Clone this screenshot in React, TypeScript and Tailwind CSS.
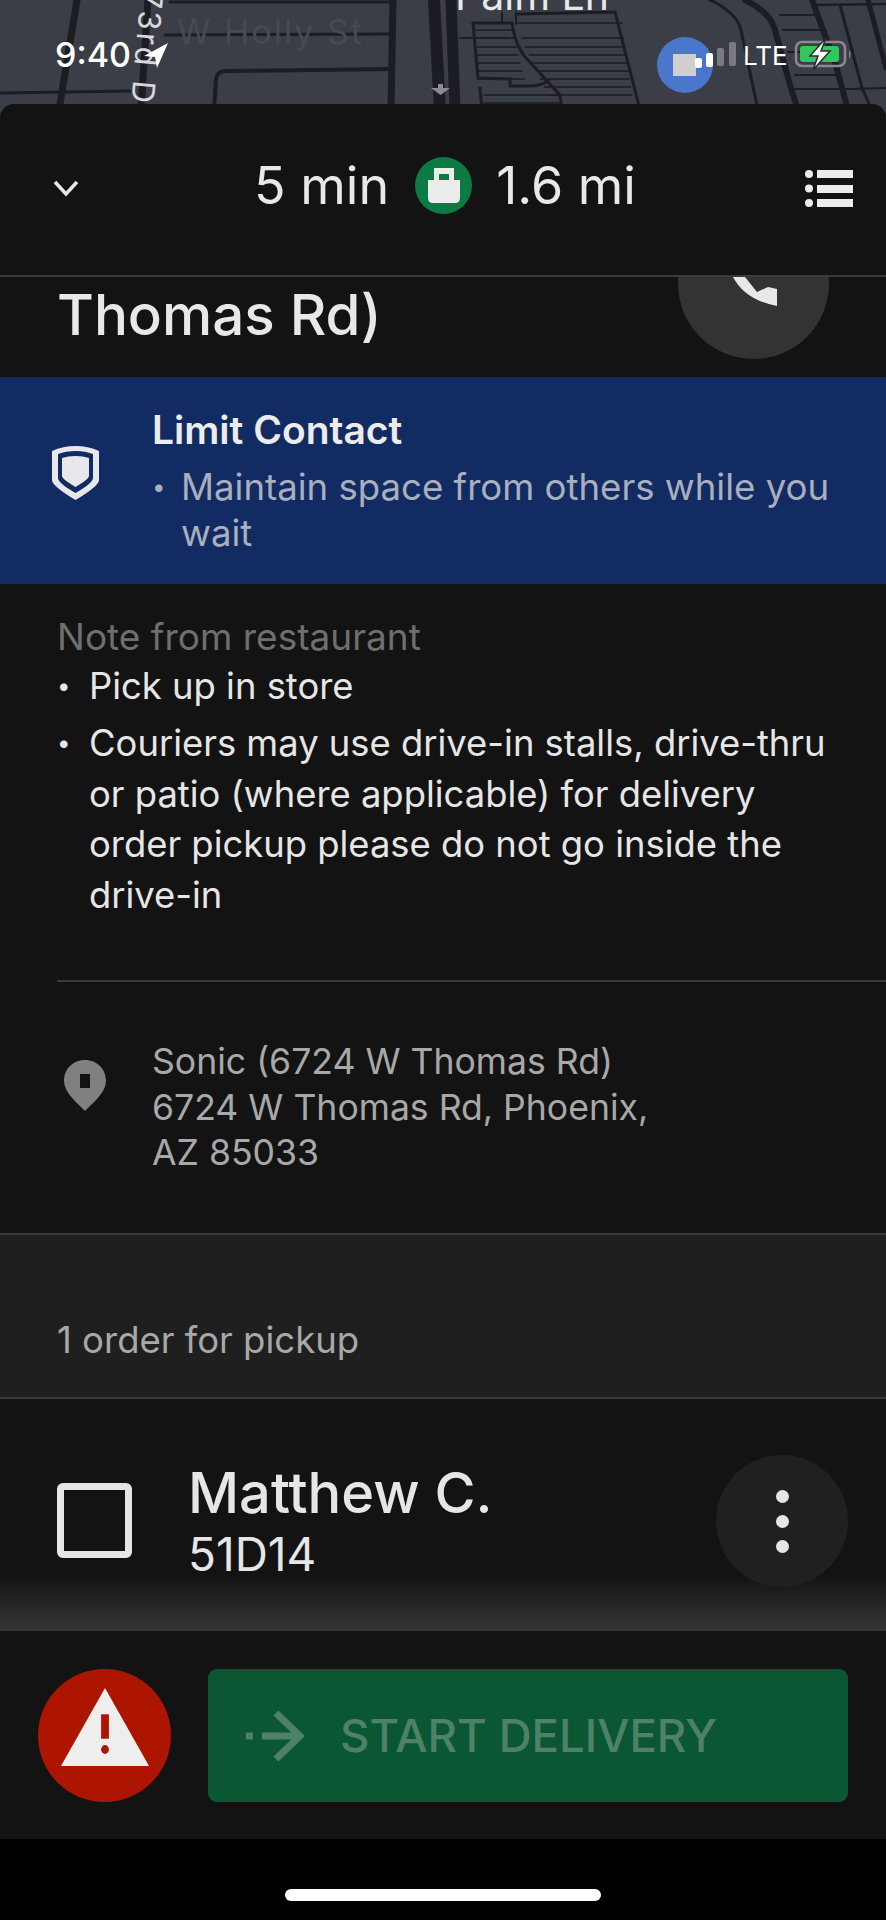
const FONT = "font-['Inter','Liberation_Sans',sans-serif]";

function MapBackdrop() {
  const left = [30, 38, 47, 55, 63, 71, 79];
  const right = [23, 38, 47, 55, 63, 71, 79, 87, 95];
  return (
    <svg className="absolute left-0 top-0" width="886" height="120" viewBox="0 0 886 120" fill="none">
      <rect width="886" height="120" fill="#3b3d47" />
      <g stroke="#1c1d23" strokeLinecap="round">
        <path d="M77 0 L59 110" strokeWidth="7" />
        <path d="M0 93 L130 91" strokeWidth="3" />
        <path d="M148 0 L141 110" strokeWidth="7" />
        <path d="M170 2 L392 2" strokeWidth="3" />
        <path d="M165 35 L392 34" strokeWidth="3" />
        <path d="M214 110 L216 79 Q217 71 226 71 L392 69" strokeWidth="4" />
        <path d="M393 0 L391 110" strokeWidth="7" />
        <path d="M434 0 L440 110" strokeWidth="12" />
        <path d="M451 0 L455 110" strokeWidth="11" />
        <path d="M460 38 L508 38" strokeWidth="2" />
        <path d="M473 23 L478 78 L512 79" strokeWidth="3" />
        <path d="M473 23 L512 23 Q516 50 530 62 L548 82 L560 95 L562 110" strokeWidth="3" />
        <path d="M510 79 L510 86 L530 86 Q540 86 548 81" strokeWidth="3" />
        <path d="M482 110 L480 88" strokeWidth="3" />
        <path d="M502 13 L502 23" strokeWidth="2" />
        <path d="M516 12 L516 24" strokeWidth="2" />
        <path d="M516 14 L615 12 L640 110" strokeWidth="3" />
        {left.map((y, i) => (
          <path key={y} d={`M${476 + i * 0.4} ${y} L${512 + i * 2} ${y}`} strokeWidth="1.6" />
        ))}
        {right.map((y, i) => (
          <path key={y} d={`M${518 + i * 3.8} ${y} L${622 + i * 1.2} ${y}`} strokeWidth="1.6" />
        ))}
        <path d="M484 95 L560 95 M484 103 L560 103" strokeWidth="1.6" />
        <path d="M710 0 Q740 14 742 35 L758 110" strokeWidth="3" />
        <path d="M745 0 Q770 12 775 30 L790 85 L798 110" strokeWidth="6" />
        <path d="M812 0 L835 62 L848 110" strokeWidth="6" />
        <path d="M840 5 L862 88 L872 110" strokeWidth="3" />
        <path d="M868 0 L886 68" strokeWidth="5" />
        <path d="M815 5 L886 4" strokeWidth="2.5" />
        <path d="M780 15 L818 15 M783 30 L826 30 M788 52 L830 52 M795 75 L838 75 M792 89 L850 89 L886 88" strokeWidth="2" />
      </g>
      <path d="M431 88 h7 v-4 h5 v4 h7 l-9.500 7 z" fill="#8b8c92" />
      <text x="177" y="44" fontSize="34" fill="#474953" fontFamily="Inter, sans-serif" letterSpacing="2">W Holly St</text>
      <text x="455" y="10" fontSize="41" fill="#e8e8e8" fontFamily="Inter, sans-serif">Palm Ln</text>
      <text transform="translate(141 -10) rotate(95)" fontSize="31" fill="#d8d8dc" fontFamily="Inter, sans-serif" letterSpacing="3">73rd Dr</text>
    </svg>
  );
}

function StatusOverlay() {
  return (
    <>
      <span className={`absolute left-[55px] top-[36px] text-[34px] leading-[38px] font-medium text-white ${FONT}`}>9:40</span>
      <svg className="absolute left-[141px] top-[40px]" width="30" height="30" viewBox="0 0 30 30">
        <path d="M27 3 L3 16 L14 17 L16 28 Z" fill="#fff" />
      </svg>
      <div className="absolute left-[657px] top-[37px] h-[56px] w-[56px] rounded-full bg-[#4a77c9]" />
      <svg className="absolute left-[670px] top-[40px]" width="70" height="40" viewBox="0 0 70 40">
        <rect x="3" y="14" width="23" height="22" fill="#cfcfcf" />
        <rect x="25" y="18" width="7" height="10" rx="2" fill="#fff" />
        <rect x="36" y="13" width="7" height="14" rx="2" fill="#fff" />
        <rect x="47" y="8" width="7" height="18" rx="2" fill="#7a7b80" />
        <rect x="59" y="2" width="7" height="24" rx="2" fill="#7a7b80" />
      </svg>
      <span className={`absolute left-[743px] top-[40px] text-[26px] leading-[32px] font-normal text-white ${FONT}`}>LTE</span>
      <svg className="absolute left-[793px] top-[38px]" width="62" height="32" viewBox="0 0 62 32">
        <rect x="3" y="4" width="49" height="24" rx="6" fill="none" stroke="#8a8a8e" strokeWidth="2.5" />
        <rect x="7" y="8" width="39" height="16" rx="3" fill="#32c95c" />
        <path d="M56 12 Q59 15 56 21 Z" fill="#8a8a8e" />
        <path d="M33 0 L17 18 L25 18 L20 32 L37 13 L28 13 Z" fill="#fff" stroke="#2a2b2f" strokeWidth="1.5" />
      </svg>
    </>
  );
}

function Header() {
  return (
    <div className="grid h-[171px] grid-cols-[1fr_auto_1fr] items-center pb-[8px]">
      <svg className="ml-[52px] mt-[5px]" width="28" height="18" viewBox="0 0 28 18" fill="none">
        <path d="M3 3 L14 15 L25 3" stroke="#e8e8e8" strokeWidth="3.5" />
      </svg>
      <div className={`ml-[4px] flex items-center text-[52px] leading-[56px] text-[#e8e8e8] ${FONT}`}>
        <span className="mr-[26px]">5 min</span>
        <div className="flex h-[57px] w-[57px] items-center justify-center rounded-full bg-[#0b7a43]">
          <svg width="34" height="36" viewBox="0 0 34 36">
            <path d="M7 0 H27 V12 H22 V6 H12 V12 H7 Z" fill="#ececec" />
            <path d="M1 12 H33 V30 Q33 35 28 35 H6 Q1 35 1 30 Z" fill="#ececec" />
          </svg>
        </div>
        <span className="ml-[24px]">1.6 mi</span>
      </div>
      <svg className="ml-auto mr-[33px] mt-[5px]" width="48" height="37" viewBox="0 0 48 37" fill="#ececec">
        <circle cx="4" cy="4" r="4" />
        <circle cx="4" cy="18.500" r="4" />
        <circle cx="4" cy="33" r="4" />
        <rect x="12" y="0" width="36" height="8" />
        <rect x="12" y="15" width="36" height="8" />
        <rect x="12" y="29" width="36" height="8" />
      </svg>
    </div>
  );
}

function TitleRow() {
  return (
    <div className="flex h-[102px] items-start justify-between overflow-hidden border-t-2 border-[#3a3a3a] pl-[57px] pr-[57px]">
      <span className={`mt-[6px] text-[56.500px] font-[450] leading-[64px] text-[#e8e8e8] ${FONT}`}>Thomas Rd)</span>
      <div className="relative -mt-[69px] h-[151px] w-[151px] rounded-full bg-[#333333]">
        <svg className="absolute left-0 top-0" width="151" height="151" viewBox="0 0 151 151">
          <path d="M55 69 Q67 92 99 98 L99 81 L90 79 L79 84 L67 69 Z" fill="#e8e8e8" />
        </svg>
      </div>
    </div>
  );
}

function LimitContact() {
  return (
    <div className={`flex h-[207px] bg-[#122b62] pl-[52px] pt-[31px] ${FONT}`}>
      <svg className="mt-[38px] shrink-0" width="47" height="54" viewBox="0 0 47 54">
        <path d="M23.500 0 Q36 0 47 5 V34 Q47 40 23.500 54 Q0 40 0 34 V5 Q11 0 23.500 0 Z" fill="#e8e8ec" />
        <path d="M23.500 5 Q33 5 41 8 V32 Q41 37 23.500 47 Q6 37 6 32 V8 Q14 5 23.500 5 Z" fill="#122b62" />
        <path d="M23.500 10 Q31 10 37 12 V30 Q37 33 23.500 41 Q10 33 10 30 V12 Q16 10 23.500 10 Z" fill="#e8e8ec" />
      </svg>
      <div className="ml-[53px] w-[700px]">
        <div className="text-[39px] font-semibold leading-[44px] text-[#ececec]">Limit Contact</div>
        <div className="mt-[12px] flex text-[36.600px] leading-[46px] text-[#a9afbd]">
          <span className="w-[29px] shrink-0 text-[24px]">•</span>
          <span className="w-[660px]">Maintain space from others while you wait</span>
        </div>
      </div>
    </div>
  );
}

function Note() {
  return (
    <div className={`h-[396px] pl-[57px] pt-[31px] ${FONT}`}>
      <div className="text-[37px] leading-[44px] text-[#6f6f6f]">Note from restaurant</div>
      <div className="mt-[2px] flex text-[36.400px] leading-[50px] text-[#e6e6e6]">
        <span className="w-[32px] shrink-0 text-[24px]">•</span>
        <span>Pick up in store</span>
      </div>
      <div className="mt-[7px] flex text-[36.400px] leading-[50.500px] text-[#e6e6e6]">
        <span className="w-[32px] shrink-0 text-[24px]">•</span>
        <span className="w-[750px]">
          Couriers may use drive-in stalls, drive-thru or patio (where applicable) for delivery order pickup please do not go inside the drive-in
        </span>
      </div>
    </div>
  );
}

function Address() {
  return (
    <div className={`h-[253px] pl-[57px] ${FONT}`}>
      <div className="h-[2px] bg-[#3a3a3a]" />
      <div className="flex pt-[57px]">
        <svg className="ml-[7px] mt-[21px] shrink-0" width="42" height="51" viewBox="0 0 42 51">
          <path d="M21 0 C33 0 42 9 42 21 C42 32 30 42 21 51 C12 42 0 32 0 21 C0 9 9 0 21 0 Z" fill="#808080" />
          <rect x="16" y="14" width="10" height="14" fill="#131313" />
        </svg>
        <div className="ml-[46px] w-[540px] text-[35.600px] leading-[45.500px] text-[#a8a8a8]">
          <div>Sonic (6724 W Thomas Rd)</div>
          <div>6724 W Thomas Rd, Phoenix,</div>
          <div>AZ 85033</div>
        </div>
      </div>
    </div>
  );
}

function OrderBand() {
  return (
    <div className={`h-[166px] border-y-2 border-[#3a3a3a] bg-[#1f1f1f] pl-[57px] pt-[83px] text-[36.500px] leading-[44px] text-[#a8a8a8] ${FONT}`}>
      1 order for pickup
    </div>
  );
}

function OrderRow() {
  return (
    <div className={`flex h-[232px] bg-[linear-gradient(to_bottom,#131313_0,#131313_176px,#363636_232px)] pl-[57px] pr-[38px] ${FONT}`}>
      <div className="mt-[84px] h-[75px] w-[75px] shrink-0 rounded-[6px] border-[7px] border-[#e6e6e6]" />
      <div className="ml-[56px] mt-[66px]">
        <div className="text-[56px] font-[450] leading-[56px] text-[#e6e6e6]">Matthew C.</div>
        <div className="mt-[8px] text-[46px] leading-[50px] text-[#e6e6e6]">51D14</div>
      </div>
      <div className="ml-auto mt-[56px] flex h-[132px] w-[132px] flex-col items-center justify-center gap-[12px] rounded-full bg-[#202020]">
        <div className="h-[13px] w-[13px] rounded-full bg-[#e6e6e6]" />
        <div className="h-[13px] w-[13px] rounded-full bg-[#e6e6e6]" />
        <div className="h-[13px] w-[13px] rounded-full bg-[#e6e6e6]" />
      </div>
    </div>
  );
}

function Footer() {
  return (
    <div className="flex h-[208px] gap-[37px] bg-[#131313] pl-[38px] pr-[38px] pt-[38px]">
      <div className="flex h-[133px] w-[133px] shrink-0 items-center justify-center rounded-full bg-[#ad1500]">
        <svg width="88" height="80" viewBox="0 0 90 80" className="mb-[18px]">
          <path d="M45 0 L90 80 H0 Z" fill="#eeeeee" />
          <rect x="41" y="27" width="8" height="25" fill="#ad1500" />
          <ellipse cx="45" cy="63" rx="4" ry="4.500" fill="#ad1500" />
        </svg>
      </div>
      <div className={`flex h-[133px] flex-1 items-center rounded-[9px] bg-[#0b5733] pl-[37px] ${FONT}`}>
        <svg width="60" height="52" viewBox="0 0 60 52" fill="none" stroke="#4f8169" strokeWidth="7">
          <path d="M1 26 H8 M17 26 H54 M31 3 L55 26 L31 49" />
        </svg>
        <span className="ml-[35px] text-[45.500px] font-medium leading-[52px] text-[#4f8169]">START DELIVERY</span>
      </div>
    </div>
  );
}

export default function App() {
  return (
    <div className="relative h-[1920px] w-[886px] overflow-hidden bg-black pt-[104px]">
      <MapBackdrop />
      <StatusOverlay />
      <div className="relative">
        <div className="rounded-t-[14px] bg-[#131313]">
          <Header />
          <TitleRow />
          <LimitContact />
          <Note />
          <Address />
          <OrderBand />
          <OrderRow />
          <Footer />
        </div>
        <div className="flex h-[81px] items-start justify-center bg-black pt-[50px]">
          <div className="h-[12px] w-[316px] rounded-full bg-white" />
        </div>
      </div>
    </div>
  );
}
